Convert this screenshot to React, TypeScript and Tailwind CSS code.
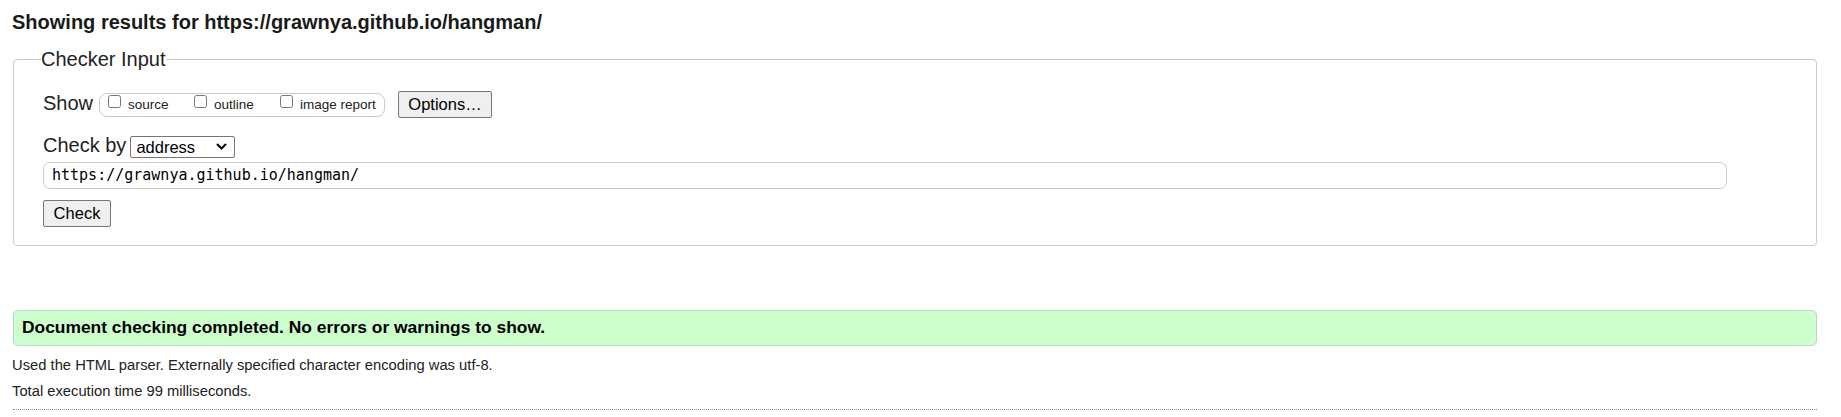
const sans = "font-['Liberation_Sans',Arial,sans-serif]";

function ShowOption({ label, last }: { label: string; last?: boolean }) {
  return (
    <label className={`flex items-start ${last ? "" : "w-[86px]"}`}>
      <input type="checkbox" className="m-0 w-[13px] h-[13px] shrink-0" />
      <span className="ml-[7px] mt-[2px] text-[13.5px] leading-[15px] whitespace-nowrap">
        {label}
      </span>
    </label>
  );
}

export default function App() {
  return (
    <div className={`${sans} text-[#222] bg-white min-h-[417px] pl-[12px] pr-[24px] pt-[11px]`}>
      {/* Heading */}
      <h2 className="text-[20px] leading-[23px] font-bold text-[#1a1a1a]">
        Showing results for https://grawnya.github.io/hangman/
      </h2>

      {/* Checker input */}
      <fieldset className="mt-[14px] ml-[1px] border border-[#cccccc] rounded-[4px] pl-[29px] pt-[20px] pb-[18px]">
        <legend className="-ml-[2px] text-[20px] leading-[23px]">Checker Input</legend>

        {/* Show */}
        <div className="flex items-start h-[27px]">
          <span className="mt-[1px] text-[20px] leading-[23px]">Show</span>
          <div className="ml-[6px] mt-[2px] flex items-start w-[286px] h-[24px] border border-[#cccccc] rounded-[8px] pl-[8px] pt-[1px]">
            <ShowOption label="source" />
            <ShowOption label="outline" />
            <ShowOption label="image report" last />
          </div>
          <button className="ml-[13px] w-[94px] h-[27px] bg-[#efefef] border border-[#767676] rounded-[2px] text-[16.5px] text-black">
            Options…
          </button>
        </div>

        {/* Check by */}
        <div className="mt-[18px] flex items-start h-[22px]">
          <span className="-mt-[2px] text-[20px] leading-[22px]">Check by</span>
          <div className="ml-[4px] w-[105px] h-[22px] border border-[#767676] rounded-[2px] flex items-center justify-between pl-[5px] pr-[7px] text-[16.5px] text-black">
            <span>address</span>
            <svg width="11" height="7" viewBox="0 0 11 7" className="-mt-[2px]">
              <polyline points="1,1 5.5,5.5 10,1" fill="none" stroke="#000" strokeWidth="2" />
            </svg>
          </div>
        </div>

        {/* Address */}
        <div className="mt-[4px] w-[1684px] h-[27px] border border-[#cccccc] rounded-[7px] flex items-center pl-[8px] font-['DejaVu_Sans_Mono',monospace] text-[15px] text-black">
          https://grawnya.github.io/hangman/
        </div>

        <button className="mt-[11px] w-[68px] h-[27px] bg-[#efefef] border border-[#767676] rounded-[2px] text-[16.5px] text-black">
          Check
        </button>
      </fieldset>

      {/* Result */}
      <div className="mt-[64px] ml-[1px] bg-[#ccffcc] border border-[#cccccc] rounded-[5px] pl-[8px] pt-[6px] pb-[8px]">
        <p className="text-[17.4px] leading-[20px] font-bold text-black">
          Document checking completed. No errors or warnings to show.
        </p>
      </div>

      <p className="mt-[10px] text-[14.75px] leading-[18px]">
        Used the HTML parser. Externally specified character encoding was utf-8.
      </p>
      <p className="mt-[8px] text-[14.75px] leading-[18px]">Total execution time 99 milliseconds.</p>

      <div className="mt-[9px] ml-[1px] border-t border-dotted border-[#888888]" />
    </div>
  );
}
